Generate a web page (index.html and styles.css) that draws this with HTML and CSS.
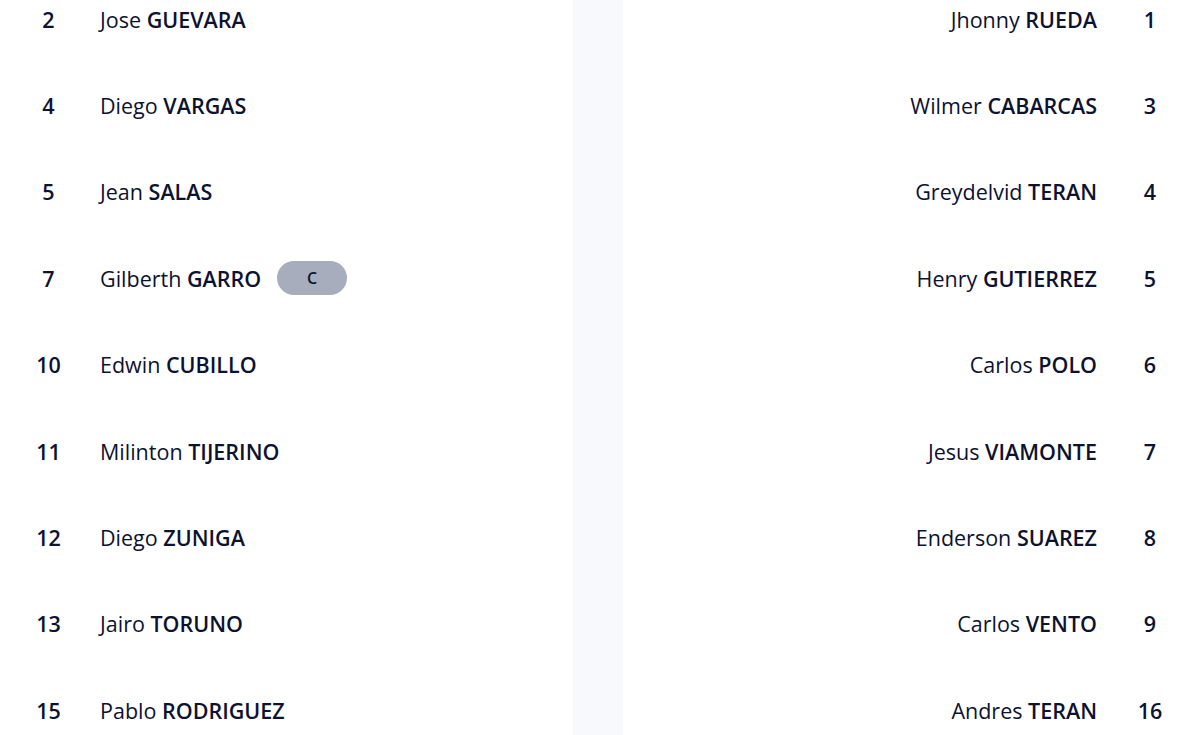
FILE: index.html
```html
<!DOCTYPE html>
<html lang="es">
<head>
<meta charset="utf-8">
<title>Alineaciones</title>
<link rel="stylesheet" href="styles.css">
</head>
<body>
<div class="lineups">
  <div class="team team-home">
    <div class="row"><span class="num">2</span><span class="name">Jose <b>GUEVARA</b></span></div>
    <div class="row"><span class="num">4</span><span class="name">Diego <b>VARGAS</b></span></div>
    <div class="row"><span class="num">5</span><span class="name">Jean <b>SALAS</b></span></div>
    <div class="row"><span class="num">7</span><span class="name">Gilberth <b>GARRO</b></span><span class="badge">C</span></div>
    <div class="row"><span class="num">10</span><span class="name">Edwin <b>CUBILLO</b></span></div>
    <div class="row"><span class="num">11</span><span class="name">Milinton <b>TIJERINO</b></span></div>
    <div class="row"><span class="num">12</span><span class="name">Diego <b>ZUNIGA</b></span></div>
    <div class="row"><span class="num">13</span><span class="name">Jairo <b>TORUNO</b></span></div>
    <div class="row"><span class="num">15</span><span class="name">Pablo <b>RODRIGUEZ</b></span></div>
  </div>
  <div class="divider"></div>
  <div class="team team-away">
    <div class="row"><span class="name">Jhonny <b>RUEDA</b></span><span class="num">1</span></div>
    <div class="row"><span class="name">Wilmer <b>CABARCAS</b></span><span class="num">3</span></div>
    <div class="row"><span class="name">Greydelvid <b>TERAN</b></span><span class="num">4</span></div>
    <div class="row"><span class="name">Henry <b>GUTIERREZ</b></span><span class="num">5</span></div>
    <div class="row"><span class="name">Carlos <b>POLO</b></span><span class="num">6</span></div>
    <div class="row"><span class="name">Jesus <b>VIAMONTE</b></span><span class="num">7</span></div>
    <div class="row"><span class="name">Enderson <b>SUAREZ</b></span><span class="num">8</span></div>
    <div class="row"><span class="name">Carlos <b>VENTO</b></span><span class="num">9</span></div>
    <div class="row"><span class="name">Andres <b>TERAN</b></span><span class="num">16</span></div>
  </div>
</div>
</body>
</html>
```
FILE: styles.css
```css
html, body {
  margin: 0;
  padding: 0;
  background: #ffffff;
  overflow: hidden;
}
body {
  font-family: "Open Sans", "Noto Sans", sans-serif;
  color: #0c1230;
  font-size: 21.5px;
}
.lineups {
  display: grid;
  grid-template-columns: 573px 50px 1fr;
  height: 735px;
}
.divider {
  background: #f8f9fc;
}
.team {
  display: flex;
  flex-direction: column;
  margin-top: -24px;
}
.row {
  height: 86.4px;
  flex: none;
  display: flex;
  align-items: center;
}
.num {
  width: 97px;
  text-align: center;
  font-weight: 600;
  flex: none;
}
.team-home .name {
  margin-left: 3px;
}
.team-away .row {
  justify-content: flex-end;
}
.team-away .name {
  margin-right: 3px;
}
.team-away .num {
  width: 100px;
}
.name b {
  font-weight: 600;
}
.badge {
  margin-left: 16px;
  width: 70px;
  height: 34px;
  border-radius: 17px;
  background: #a8adbd;
  display: flex;
  align-items: center;
  justify-content: center;
  font-size: 16px;
  font-weight: 600;
  color: #0c1230;
}
```
